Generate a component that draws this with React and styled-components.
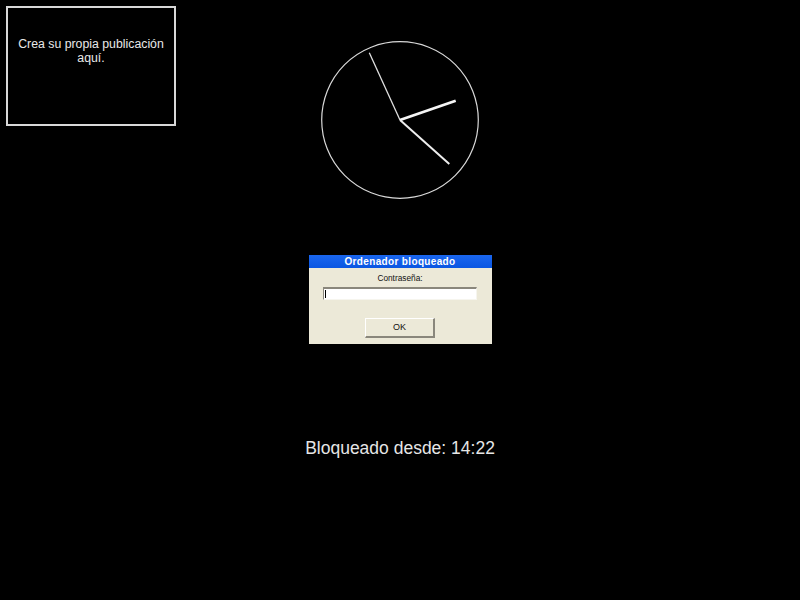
import React from "react";
import styled, { createGlobalStyle } from "styled-components";

const Global = createGlobalStyle`
  html, body { margin: 0; padding: 0; background: #000; }
  body { width: 800px; height: 600px; overflow: hidden; font-family: "Liberation Sans", Arial, sans-serif; }
`;

const Page = styled.div`
  width: 800px;
  height: 600px;
  background: #000;
  display: flex;
  flex-direction: column;
  align-items: center;
`;

const TopRow = styled.div`
  width: 100%;
  height: 200px;
  display: grid;
  grid-template-columns: 1fr 160px 1fr;
`;

const PubBox = styled.div`
  justify-self: start;
  align-self: start;
  margin: 6px 0 0 6px;
  width: 170px;
  height: 120px;
  box-sizing: border-box;
  border: 2px solid #d8d8d8;
  padding: 29px 6px 0;
  color: #e8e8e8;
  font-size: 12.3px;
  line-height: 14px;
  text-align: center;
`;

const ClockSvg = styled.svg`
  margin-top: 40px;
  display: block;
`;

const Dialog = styled.div`
  margin-top: 55px;
  width: 183px;
  height: 89px;
  background: #ece9d8;
  display: flex;
  flex-direction: column;
  align-items: center;
  box-sizing: border-box;
`;

const TitleBar = styled.div`
  width: 100%;
  height: 13px;
  background: linear-gradient(#1a66ee, #0a56e2);
  color: #fff;
  font-weight: bold;
  font-size: 10px;
  letter-spacing: 0.35px;
  line-height: 13px;
  text-align: center;
`;

const Label = styled.div`
  margin-top: 5px;
  height: 10px;
  line-height: 10px;
  font-size: 8.3px;
  color: #111;
`;

const Field = styled.div`
  margin-top: 4px;
  width: 154px;
  height: 13px;
  box-sizing: border-box;
  background: #fff;
  border-top: 2px solid #8a877c;
  border-left: 1px solid #8a877c;
  border-right: 1px solid #f6f5ee;
  border-bottom: 1px solid #f6f5ee;
  position: relative;
`;

const Caret = styled.span`
  position: absolute;
  left: 1px;
  top: 1px;
  width: 1px;
  height: 8px;
  background: #000;
`;

const OkButton = styled.div`
  margin-top: 18px;
  width: 70px;
  height: 20px;
  box-sizing: border-box;
  background: #ece9d8;
  border-top: 1px solid #fff;
  border-left: 1px solid #fff;
  border-right: 2px solid #8a877c;
  border-bottom: 2px solid #8a877c;
  font-size: 9px;
  line-height: 17px;
  text-align: center;
  color: #111;
`;

const LockedText = styled.div`
  margin-top: 94px;
  font-size: 17.5px;
  line-height: 20px;
  color: #e6e6e6;
`;

function Clock() {
  return (
    <ClockSvg width="160" height="160" viewBox="0 0 160 160">
      <circle cx="80" cy="80" r="78.3" fill="none" stroke="#d9d9d9" strokeWidth="1.2" />
      <line x1="80" y1="80" x2="49.3" y2="12.7" stroke="#e0e0e0" strokeWidth="1.3" />
      <line x1="80" y1="80" x2="129.3" y2="124" stroke="#eeeeee" strokeWidth="2" />
      <line x1="80" y1="80" x2="135.7" y2="60.7" stroke="#f5f5f5" strokeWidth="2.8" />
    </ClockSvg>
  );
}

export default function App() {
  return (
    <>
      <Global />
      <Page>
        <TopRow>
          <PubBox>
            Crea su propia publicación
            <br />
            aquí.
          </PubBox>
          <Clock />
          <div />
        </TopRow>
        <Dialog>
          <TitleBar>Ordenador bloqueado</TitleBar>
          <Label>Contraseña:</Label>
          <Field>
            <Caret />
          </Field>
          <OkButton>OK</OkButton>
        </Dialog>
        <LockedText>Bloqueado desde: 14:22</LockedText>
      </Page>
    </>
  );
}
